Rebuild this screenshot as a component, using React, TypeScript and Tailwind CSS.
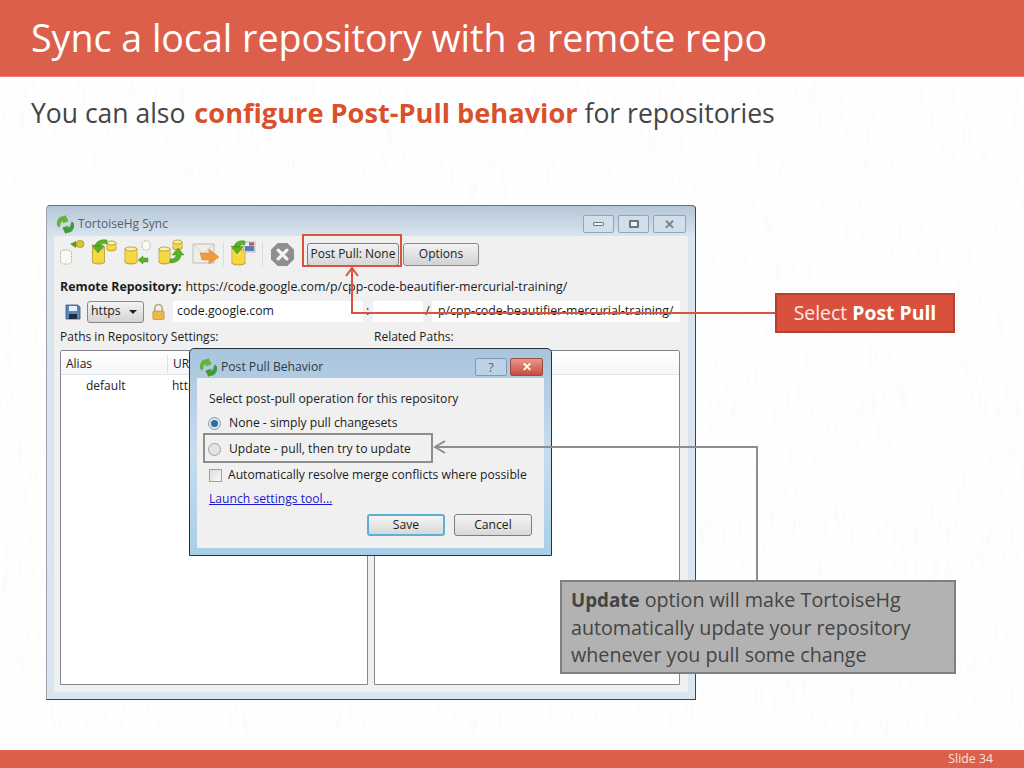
const Cyl = ({ x, y, w = 11, h = 15 }: { x: number; y: number; w?: number; h?: number }) => (
  <g>
    <rect x={x} y={y + 2} width={w} height={h - 4} fill="#f3d137" stroke="#a58a20" strokeWidth="0.7" />
    <ellipse cx={x + w / 2} cy={y + h - 2} rx={w / 2} ry="2" fill="#f3d137" stroke="#a58a20" strokeWidth="0.7" />
    <rect x={x + 0.4} y={y + 3} width={w - 0.8} height={h - 5} fill="#f6d845" />
    <ellipse cx={x + w / 2} cy={y + 2} rx={w / 2} ry="2" fill="#fcef9f" stroke="#a58a20" strokeWidth="0.7" />
  </g>
)

const Ghost = ({ x, y, w = 11, h = 13 }: { x: number; y: number; w?: number; h?: number }) => (
  <rect x={x} y={y} width={w} height={h} rx="3" fill="#fafaf2" stroke="#9a9a8a" strokeWidth="0.8" strokeDasharray="1.5 1" />
)

const GreenCurve = ({ d }: { d: string }) => <path d={d} fill="#5cb026" stroke="#2f7d12" strokeWidth="0.4" />

function ToolIcon({ children }: { children: React.ReactNode }) {
  return (
    <svg width="32" height="30" viewBox="0 0 32 30" className="shrink-0">
      {children}
    </svg>
  )
}

function Toolbar() {
  return (
    <div className="flex h-[36px] items-center">
      <ToolIcon>
        <Ghost x={0.5} y={11} w={11} h={14} />
        <path d="M10 5l6-3v2h4v3h-4v2z" fill="#5d9c1c" />
        <rect x={16} y={1.5} width={8} height={7} rx={3.5} fill="#d8c62e" stroke="#8f8416" strokeWidth="0.6" />
      </ToolIcon>
      <ToolIcon>
        <Cyl x={0.5} y={6} w={12} h={19} />
        <Cyl x={15} y={2} w={9} h={10} />
        <GreenCurve d="M0 6L12 7 6 14ZM3 7C4 2 9 0 15 1L15 5C11 4 9 5 8 7Z" />
      </ToolIcon>
      <ToolIcon>
        <Cyl x={1} y={8} w={12} h={17} />
        <Ghost x={18} y={2} w={8} h={9} />
        <GreenCurve d="M14 21l5-4v2h5v4h-5v2z" />
      </ToolIcon>
      <ToolIcon>
        <Cyl x={3} y={8} w={11} h={17} />
        <Cyl x={17} y={1} w={9} h={10} />
        <GreenCurve d="M22 9l6 7h-3c0 5-5 8-11 8v-4c3 0 6-1 6-4h-4z" />
      </ToolIcon>
      <div className="w-[3px]" />
      <ToolIcon>
        <path d="M2 5h21v19H2z" fill="#f1eeea" stroke="#b5b0a8" strokeWidth="0.8" />
        <path d="M2 5l10 10 11-10" fill="none" stroke="#c9c4bc" strokeWidth="0.8" />
        <path d="M9 14h9v-4l10 8-10 7v-4h-7z" fill="#ef9a3e" stroke="#dc8226" strokeWidth="0.5" />
      </ToolIcon>
      <div className="h-[24px] w-[1px] bg-[#dcdcdc]" />
      <ToolIcon>
        <Cyl x={8} y={7} w={13} h={19} />
        <rect x={20} y={3} width={11} height={10} fill="#eef0f5" stroke="#8c94a6" strokeWidth="0.6" />
        <rect x={21} y={7} width={9} height={5} fill="#5a79b5" />
        <rect x={25} y={3.5} width={5} height={3} fill="#c8504a" />
        <GreenCurve d="M7 7L19 8 13 15ZM10 8C11 3 15 1 21 2L21 6C18 5 16 6 15 8Z" />
      </ToolIcon>
      <div className="ml-[6px] h-[24px] w-[1px] bg-[#dcdcdc]" />
      <svg width="25" height="25" viewBox="0 0 26 26" className="ml-[7px] shrink-0">
        <path d="M8 1h10l7 7v10l-7 7H8l-7-7V8z" fill="#8e8e8e" />
        <path d="M8.5 8.5l9 9M17.5 8.5l-9 9" stroke="#f4f4f4" strokeWidth="3.4" strokeLinecap="round" />
      </svg>
      <div className="ml-[12px] flex h-[23px] w-[92px] items-center justify-center rounded-[3px] border border-[#7d7d7d] bg-gradient-to-b from-[#f3f3f3] to-[#d6d6d6] text-[12px] text-[#222]">
        Post Pull: None
      </div>
      <div className="ml-[4px] flex h-[23px] w-[76px] items-center justify-center rounded-[3px] border border-[#8a8a8a] bg-gradient-to-b from-[#f3f3f3] to-[#d2d2d2] text-[12px] text-[#222]">
        Options
      </div>
    </div>
  )
}

function TgLogo() {
  return (
    <svg width="19" height="19" viewBox="0 0 18 18" className="shrink-0">
      <path d="M1 10C0 5 3 1 8 1l1-1 3 6-6 2 1-2c-2 0-3 2-3 4l-1 2z" fill="#62b436" />
      <path d="M17 8c1 5-2 9-7 9l-1 1-3-6 6-2-1 2c2 0 3-2 3-4l1-2z" fill="#3f9c3b" />
    </svg>
  )
}

function CaptionButtons() {
  return (
    <div className="flex gap-[4px]">
      <div className="flex h-[18px] w-[31px] items-center justify-center rounded-[2px] border border-[#8fa6ba] bg-[#d2dee9]">
        <div className="h-[4px] w-[11px] rounded-[1px] border border-[#6b7681] bg-[#eef2f5]" />
      </div>
      <div className="flex h-[18px] w-[31px] items-center justify-center rounded-[2px] border border-[#8fa6ba] bg-[#d2dee9]">
        <div className="h-[8px] w-[10px] rounded-[1px] border-2 border-[#6b7681] bg-[#eef2f5]" />
      </div>
      <div className="flex h-[18px] w-[33px] items-center justify-center rounded-[2px] border border-[#8fa6ba] bg-[#d2dee9] text-[13px] font-bold leading-none text-[#76818c]">
        ✕
      </div>
    </div>
  )
}

function SyncWindow() {
  return (
    <div className="relative ml-[46px] flex h-[495px] w-[650px] flex-col rounded-t-[4px] border border-[#3d4650] border-l-[#9aa4ae] border-t-[#6a747e] bg-gradient-to-b from-[#b5c6d6] via-[#d8e4ee] via-[6%] to-[#d8e6f2] px-[7px] pb-[7px] text-[12px] text-[#1c1c1c]">
      <div className="flex h-[30px] shrink-0 items-center justify-between pt-[6px] pr-[2px]">
        <div className="flex items-center gap-[3px] pl-[2px] text-[#56616c]">
          <TgLogo />
          <span>TortoiseHg Sync</span>
        </div>
        <CaptionButtons />
      </div>

      <div className="flex min-h-0 flex-1 flex-col bg-[#f0f0f0] pl-[6px] pr-[8px] pb-[7px]">
        <Toolbar />
        <div className="flex h-[26px] items-center pt-[4px] text-[12.4px] whitespace-nowrap">
          <b className="mr-[4px] font-bold">Remote Repository:</b>
          <span>https://code.google.com/p/cpp-code-beautifier-mercurial-training/</span>
        </div>
        <div className="flex h-[25px] items-center pt-[2px] text-[12.3px]">
          <svg width="16" height="16" viewBox="0 0 16 16" className="ml-[5px] shrink-0">
            <path d="M1 1h12l2 2v12H1z" fill="#5a86bd" stroke="#34557f" strokeWidth="0.8" />
            <rect x="4" y="2" width="8" height="5" fill="#e8eef5" />
            <rect x="4" y="10" width="8" height="5" fill="#1e2c40" />
          </svg>
          <div className="ml-[6px] flex h-[22px] w-[57px] items-center justify-between rounded-[3px] border border-[#8a8a8a] bg-gradient-to-b from-[#f3f3f3] to-[#d4d4d4] px-[3px]">
            <span>https</span>
            <span className="mr-[3px] h-0 w-0 border-x-[4px] border-t-[4px] border-x-transparent border-t-[#222]" />
          </div>
          <svg width="15" height="18" viewBox="0 0 16 18" className="ml-[7px] shrink-0">
            <path d="M4 8V5a4 4 0 018 0v3" fill="none" stroke="#b4a878" strokeWidth="1.6" />
            <rect x="2" y="8" width="12" height="9" rx="1" fill="#eab94a" stroke="#b98a26" strokeWidth="0.7" />
          </svg>
          <div className="ml-[7px] flex h-[21px] w-[190px] items-center bg-white pl-[4px]">code.google.com</div>
          <span className="w-[9px] text-center">:</span>
          <div className="ml-[1px] h-[21px] w-[50px] bg-white" />
          <span className="w-[9px] text-center">/</span>
          <div className="flex h-[21px] flex-1 items-center whitespace-nowrap bg-white pl-[6px]">p/cpp-code-beautifier-mercurial-training/</div>
        </div>
        <div className="flex h-[27px] items-center pt-[1px]">
          <span className="w-[314px]">Paths in Repository Settings:</span>
          <span>Related Paths:</span>
        </div>
        <div className="flex min-h-0 flex-1 gap-[6px]">
          <div className="w-[308px] shrink-0 rounded-t-[2px] border border-[#828790] bg-white">
            <div className="flex h-[24px] items-center border-b border-[#e4e4e4] bg-gradient-to-b from-white to-[#f5f6f7] pt-[2px]">
              <span className="w-[106px] pl-[5px]">Alias</span>
              <span className="flex-1 border-l border-[#e0e0e0] pl-[5px]">URL</span>
            </div>
            <div className="flex h-[20px] items-end">
              <span className="w-[111px] pl-[25px]">default</span>
              <span>http</span>
            </div>
          </div>
          <div className="flex-1 rounded-t-[2px] border border-[#828790] bg-white">
            <div className="h-[24px] border-b border-[#e4e4e4] bg-gradient-to-b from-white to-[#f5f6f7]" />
          </div>
        </div>
      </div>
    </div>
  )
}

function PullDialog() {
  return (
    <div className="absolute left-[189px] top-[348px] flex h-[208px] w-[363px] flex-col rounded-t-[5px] border border-[#28323c] bg-gradient-to-b from-[#a9c4de] via-[#c6dcef] to-[#a8cfe8] px-[7px] pb-[7px] text-[12.15px] text-[#1c1c1c]">
      <div className="flex h-[29px] shrink-0 items-center justify-between pt-[7px] pr-[1px]">
        <div className="flex items-center gap-[3px] pl-[2px] text-[#2c3a48]">
          <TgLogo />
          <span>Post Pull Behavior</span>
        </div>
        <div className="flex gap-[3px]">
          <div className="flex h-[18px] w-[32px] items-center justify-center rounded-[2px] border border-[#7f9ab3] bg-[#bcd2e6] text-[13px] leading-none text-[#666]">?</div>
          <div className="flex h-[18px] w-[33px] items-center justify-center rounded-[2px] border border-[#9b4a40] bg-gradient-to-b from-[#e49a8c] to-[#c64a3a] text-[12px] font-bold leading-none text-white">✕</div>
        </div>
      </div>
      <div className="flex flex-1 flex-col bg-[#f0f0f0] pl-[12px] pr-[12px]">
        <div className="flex h-[32px] items-end pb-[2px]">Select post-pull operation for this repository</div>
        <div className="-ml-[1px] flex h-[26px] items-center gap-[8px]">
          <span className="flex h-[13px] w-[13px] items-center justify-center rounded-full border border-[#8a9aa8] bg-[#dfe8ef]">
            <span className="h-[7px] w-[7px] rounded-full bg-[#2c6f9e]" />
          </span>
          <span>None - simply pull changesets</span>
        </div>
        <div className="-ml-[1px] flex h-[26px] items-center gap-[8px]">
          <span className="h-[13px] w-[13px] rounded-full border border-[#a0a0a0] bg-[#e4e4e4]" />
          <span>Update - pull, then try to update</span>
        </div>
        <div className="flex h-[26px] items-center gap-[6px]">
          <span className="h-[13px] w-[13px] border border-[#a0a0a0] bg-gradient-to-br from-[#dedede] to-[#f8f8f8]" />
          <span>Automatically resolve merge conflicts where possible</span>
        </div>
        <div className="flex h-[22px] items-center text-[#1a1ad0] underline">Launch settings tool...</div>
        <div className="flex justify-end gap-[9px] pt-[4px]">
          <div className="flex h-[22px] w-[78px] items-center justify-center rounded-[3px] border-2 border-[#5fb0d6] bg-gradient-to-b from-[#f5f5f5] to-[#d8d8d8]">Save</div>
          <div className="flex h-[22px] w-[78px] items-center justify-center rounded-[3px] border border-[#7e7e7e] bg-gradient-to-b from-[#f5f5f5] to-[#d8d8d8]">Cancel</div>
        </div>
      </div>
    </div>
  )
}

// faint watermark strokes behind the slide
const marks = Array.from({ length: 1100 }, (_, i) => {
  const x = (i * i * 37 + i * 211) % 1024
  const y = 80 + ((i * i * 19 + i * 101) % 670)
  const h = 6 + ((i * 13) % 16)
  return `M${x} ${y}v${h}`
}).join('')

export default function App() {
  return (
    <div className="relative flex h-[768px] w-[1024px] flex-col overflow-hidden bg-[#fefefe] font-['Open_Sans',sans-serif]">
      <svg width="1024" height="768" viewBox="0 0 1024 768" className="pointer-events-none absolute left-0 top-0">
        <path d={marks} fill="none" stroke="#fbfbfb" strokeWidth="2" />
      </svg>
      <header className="relative flex h-[77px] shrink-0 items-center border-b border-[#ec7d6e] bg-[#dc5f4c] pt-[1px] pl-[31px] text-[37.6px] text-white">
        Sync a local repository with a remote repo
      </header>
      <p className="relative pl-[31px] pt-[18px] text-[26.5px] leading-[36px] text-[#454545]">
        You can also <b className="ml-[2px] text-[27.2px] font-bold text-[#d9512c]">configure Post-Pull behavior</b> for repositories
      </p>
      <main className="relative flex-1 pt-[74px]">
        <SyncWindow />
      </main>
      <footer className="relative flex h-[18px] shrink-0 items-center justify-end bg-[#dc5f4c] pr-[31px] text-[12.3px] text-[#f8e0da]">
        Slide 34
      </footer>

      <PullDialog />

      {/* highlight boxes and connectors */}
      <div className="absolute left-[302px] top-[234px] h-[33px] w-[100px] border-2 border-[#d9533f]" />
      <div className="absolute left-[203px] top-[433px] h-[30px] w-[230px] border-2 border-[#8d8d8d]" />
      <svg width="1024" height="768" viewBox="0 0 1024 768" className="pointer-events-none absolute left-0 top-0">
        <path d="M775 313H352V268M346 276l6-8 6 8" fill="none" stroke="#d9533f" strokeWidth="2" />
        <path d="M757 580V447H435M445 441l-10 6 10 6" fill="none" stroke="#8d8d8d" strokeWidth="2" />
      </svg>

      <div className="absolute left-[775px] top-[293px] flex h-[40px] w-[180px] items-center justify-center border-2 border-[#b5402f] bg-[#d9503c] text-[19.4px] text-[#fbe9e5]">
        <span>Select <b className="font-bold text-white">Post Pull</b></span>
      </div>
      <div className="absolute left-[560px] top-[580px] h-[94px] w-[396px] border-2 border-[#7f7f7f] bg-[#b2b2b2] pl-[9px] pt-[4px] text-[19.7px] leading-[27px] text-[#444]">
        <b className="text-[18.8px] font-bold">Update</b> option will make TortoiseHg
        <br />
        automatically update your repository
        <br />
        whenever you pull some change
      </div>
    </div>
  )
}
